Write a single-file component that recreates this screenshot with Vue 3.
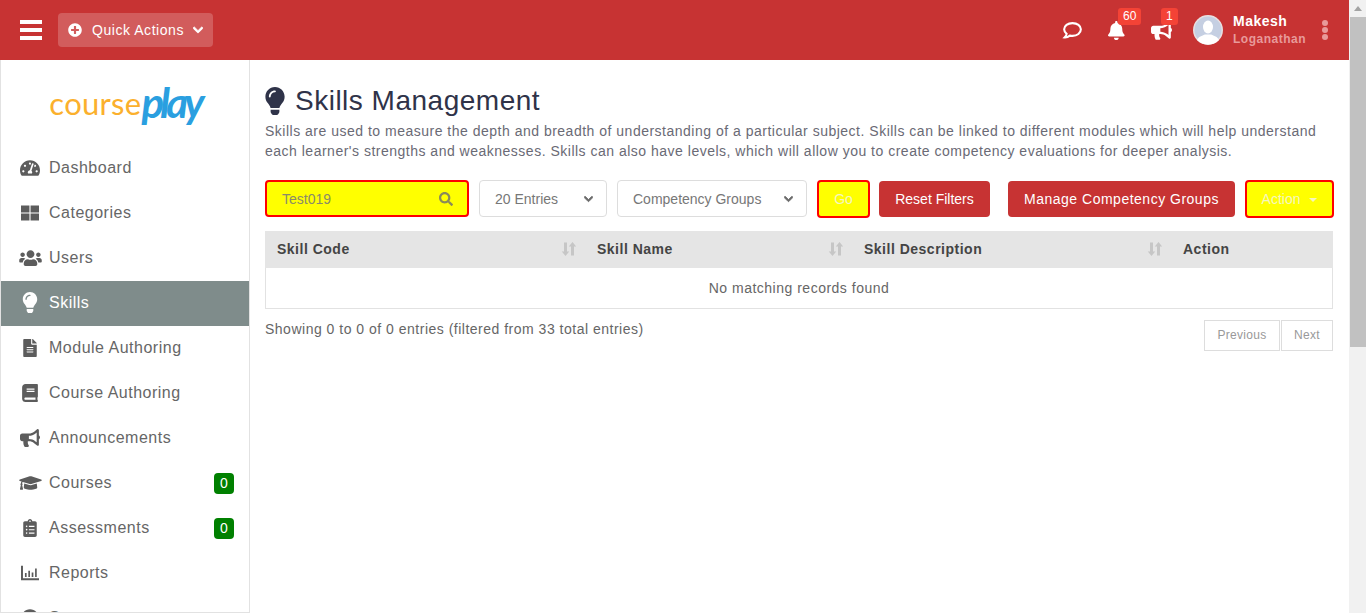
<template>
  <div class="shell">
    <div class="page">
      <header class="topbar">
        <button class="burger"><span></span><span></span><span></span></button>
        <button class="quick">
          <svg class="quick-plus" viewBox="0 0 512 512"><path :d="icons.plus" /></svg>
          <span>Quick Actions</span>
          <svg class="quick-chev" viewBox="0 0 448 512"><path :d="icons.chevron" /></svg>
        </button>
        <div class="top-right">
          <svg class="chat" viewBox="0 0 22 20"><path d="M11 2.200c-5 0-8.800 2.900-8.800 6.600 0 1.900 1 3.500 2.600 4.700-.2 1.300-1 2.600-2.100 3.800 2.100.1 4-.6 5.500-1.900.9.200 1.800.300 2.800.300 5 0 8.800-3 8.800-6.900S16 2.200 11 2.200z" /></svg>
          <div class="top-icon bell">
            <svg viewBox="0 0 448 512"><path :d="icons.bell" /></svg>
            <span class="count">60</span>
          </div>
          <div class="top-icon horn">
            <svg viewBox="0 0 576 512"><path :d="icons.bullhorn" /></svg>
            <span class="count">1</span>
          </div>
          <div class="avatar">
            <svg viewBox="0 0 30 30">
              <circle cx="15" cy="15" r="15" fill="#e8dfe0" />
              <circle cx="15" cy="15" r="13.500" fill="#c5cfe2" />
              <ellipse cx="15" cy="12" rx="5" ry="6.500" fill="#fff" />
              <path d="M4 25c2-4 6-4.500 8-5.500h6c2 1 6 1.500 8 5.500-3 3-7 4.500-11 4.500S7 28 4 25z" fill="#fff" />
            </svg>
          </div>
          <div class="who">
            <strong>Makesh</strong>
            <span>Loganathan</span>
          </div>
          <div class="dots"><i></i><i></i><i></i></div>
        </div>
      </header>

      <div class="body">
        <aside class="sidebar">
          <div class="logo"><span class="logo-a">course</span><span class="logo-b">play</span></div>
          <nav>
            <a v-for="item in menu" :key="item.label" class="nav-item" :class="{ active: item.active }">
              <span class="nav-icon">
                <svg :viewBox="item.box" :style="{ width: item.w + 'px' }"><path :d="item.d" /></svg>
              </span>
              <span class="nav-label">{{ item.label }}</span>
              <span v-if="item.badge" class="nav-badge">{{ item.badge }}</span>
            </a>
          </nav>
        </aside>

        <main class="content">
          <h1 class="title">
            <svg viewBox="0 0 352 512"><path :d="icons.bulb" /></svg>
            Skills Management
          </h1>
          <p class="desc">Skills are used to measure the depth and breadth of understanding of a particular subject. Skills can be linked to different modules which will help understand each learner's strengths and weaknesses. Skills can also have levels, which will allow you to create competency evaluations for deeper analysis.</p>

          <div class="filters">
            <div class="search">
              <span>Test019</span>
              <svg viewBox="0 0 512 512"><path :d="icons.search" /></svg>
            </div>
            <div class="select entries">
              <span>20 Entries</span>
              <svg viewBox="0 0 448 512"><path :d="icons.chevron" /></svg>
            </div>
            <div class="select groups">
              <span>Competency Groups</span>
              <svg viewBox="0 0 448 512"><path :d="icons.chevron" /></svg>
            </div>
            <button class="btn hot go">Go</button>
            <button class="btn reset">Reset Filters</button>
            <button class="btn manage">Manage Competency Groups</button>
            <button class="btn hot action">Action <i class="caret"></i></button>
          </div>

          <div class="table">
            <div class="thead">
              <div v-for="col in columns" :key="col.name" class="th">
                <span>{{ col.name }}</span>
                <svg v-if="col.sort" viewBox="0 0 16 16">
                  <path d="M3 1.500h3v9h2.200L4.500 15 .8 10.500H3zM10 5.500H7.800L11.500 1l3.700 4.500H13V14.500h-3z" />
                </svg>
              </div>
            </div>
            <div class="empty">No matching records found</div>
          </div>

          <div class="foot">
            <span class="info">Showing 0 to 0 of 0 entries (filtered from 33 total entries)</span>
            <div class="pager">
              <button class="prev">Previous</button>
              <button class="next">Next</button>
            </div>
          </div>
        </main>
      </div>
    </div>

    <div class="scrollbar">
      <div class="arrow"></div>
      <div class="thumb"></div>
    </div>
  </div>
</template>

<script setup>
const icons = {
  plus: 'M256 8C119 8 8 119 8 256s111 248 248 248 248-111 248-248S393 8 256 8zm144 276c0 6.600-5.400 12-12 12h-92v92c0 6.600-5.400 12-12 12h-56c-6.600 0-12-5.400-12-12v-92h-92c-6.600 0-12-5.400-12-12v-56c0-6.600 5.400-12 12-12h92v-92c0-6.600 5.400-12 12-12h56c6.600 0 12 5.400 12 12v92h92c6.600 0 12 5.400 12 12v56z',
  chevron: 'M207.029 381.476L12.686 187.132c-9.373-9.373-9.373-24.569 0-33.941l22.667-22.667c9.357-9.357 24.522-9.375 33.901-.04L224 284.505l154.745-154.021c9.379-9.335 24.544-9.317 33.901.04l22.667 22.667c9.373 9.373 9.373 24.569 0 33.941L240.971 381.476c-9.373 9.372-24.569 9.372-33.942 0z',
  bell: 'M224 512c35.320 0 63.970-28.650 63.970-64H160.030c0 35.350 28.650 64 63.970 64zm215.390-149.710c-19.320-20.760-55.470-51.990-55.470-154.290 0-77.700-54.480-139.900-127.940-155.160V32c0-17.670-14.320-32-31.980-32s-31.980 14.330-31.980 32v20.840C118.560 68.100 64.080 130.300 64.080 208c0 102.300-36.150 133.530-55.470 154.290-6 6.450-8.660 14.160-8.610 21.710.11 16.400 12.980 32 32.100 32h383.800c19.120 0 32-15.600 32.100-32 .05-7.550-2.610-15.270-8.610-21.710z',
  bullhorn: 'M576 240c0-23.630-12.950-44.040-32-55.120V32.010C544 23.260 537.020 0 512 0c-7.120 0-14.190 2.380-19.980 7.020l-85.030 68.030C364.280 109.190 310.660 128 256 128H64c-35.350 0-64 28.650-64 64v96c0 35.350 28.650 64 64 64h33.700c-1.390 10.480-2.180 21.140-2.180 32 0 39.770 9.260 77.350 25.560 110.940 5.190 10.690 16.520 17.060 28.400 17.060h74.280c26.050 0 41.690-29.840 25.900-50.560-16.400-21.520-26.150-48.360-26.150-77.440 0-11.110 1.620-21.790 4.410-32H256c54.660 0 108.280 18.810 150.980 52.950l85.030 68.030a32.023 32.023 0 0 0 19.980 7.020c24.920 0 32-22.780 32-32V295.130C563.050 284.040 576 263.630 576 240zm-96 141.420l-33.050-26.440C392.950 311.780 325.120 288 256 288v-96c69.120 0 136.950-23.780 190.950-66.980L480 98.580v282.840z',
  bulb: 'M96.060 454.350c.01 6.290 1.870 12.450 5.360 17.690l17.090 25.690a31.990 31.990 0 0 0 26.640 14.280h61.710a31.990 31.990 0 0 0 26.640-14.280l17.090-25.690a31.989 31.989 0 0 0 5.360-17.690l.04-38.350H96.010l.05 38.350zM0 176c0 44.370 16.450 84.850 43.560 115.780 16.520 18.850 42.360 58.230 52.210 91.450.04.26.07.52.11.78h160.240c.04-.26.07-.51.11-.78 9.850-33.220 35.690-72.600 52.210-91.450C335.550 260.850 352 220.370 352 176 352 78.610 272.910-.3 175.450 0 73.440.31 0 82.970 0 176zm176-80c-44.110 0-80 35.890-80 80 0 8.840-7.160 16-16 16s-16-7.160-16-16c0-61.760 50.240-112 112-112 8.840 0 16 7.160 16 16s-7.160 16-16 16z',
  search: 'M505 442.700L405.300 343c-4.500-4.500-10.600-7-17-7H372c27.600-35.300 44-79.700 44-128C416 93.100 322.900 0 208 0S0 93.100 0 208s93.100 208 208 208c48.300 0 92.700-16.400 128-44v16.300c0 6.400 2.500 12.500 7 17l99.700 99.700c9.400 9.400 24.600 9.400 33.900 0l28.300-28.300c9.400-9.400 9.400-24.600.1-34zM208 336c-70.700 0-128-57.200-128-128 0-70.700 57.200-128 128-128 70.700 0 128 57.200 128 128 0 70.700-57.200 128-128 128z'
}

const menu = [
  { label: 'Dashboard', box: '0 0 576 512', w: 20, d: 'M288 32C128.940 32 0 160.940 0 320c0 52.800 14.250 102.260 39.060 144.800 5.610 9.620 16.300 15.200 27.440 15.200h443c11.140 0 21.830-5.580 27.440-15.200C561.750 422.260 576 372.800 576 320c0-159.060-128.940-288-288-288zm0 64c14.710 0 26.580 10.130 30.320 23.650-1.110 2.260-2.640 4.230-3.450 6.670l-9.220 27.670c-5.130 3.490-10.970 6.010-17.640 6.010-17.670 0-32-14.330-32-32S270.330 96 288 96zM96 384c-17.670 0-32-14.330-32-32s14.330-32 32-32 32 14.330 32 32-14.330 32-32 32zm48-160c-17.670 0-32-14.330-32-32s14.330-32 32-32 32 14.330 32 32-14.330 32-32 32zm246.770-72.410l-61.330 184C343.130 347.330 352 364.540 352 384c0 11.720-3.380 22.550-8.880 32H232.880c-5.500-9.450-8.880-20.280-8.880-32 0-33.940 26.500-61.430 59.900-63.590l61.340-184.010c4.170-12.560 17.730-19.450 30.360-15.170 12.570 4.190 19.350 17.790 15.170 30.360zm14.660 57.200l15.520-46.550c3.470-1.290 7.130-2.230 11.050-2.230 17.670 0 32 14.330 32 32s-14.330 32-32 32c-11.380-.01-20.890-6.280-26.570-15.220zM480 384c-17.670 0-32-14.330-32-32s14.330-32 32-32 32 14.330 32 32-14.330 32-32 32z' },
  { label: 'Categories', box: '0 0 512 512', w: 18, d: 'M0 40h240v200H0zM272 40h240v200H272zM0 272h240v200H0zM272 272h240v200H272z' },
  { label: 'Users', box: '0 0 640 512', w: 23, d: 'M96 224c35.300 0 64-28.700 64-64s-28.700-64-64-64-64 28.700-64 64 28.700 64 64 64zm448 0c35.300 0 64-28.700 64-64s-28.700-64-64-64-64 28.700-64 64 28.700 64 64 64zm32 32h-64c-17.600 0-33.500 7.100-45.100 18.600 40.300 22.100 68.900 62 75.100 109.400h66c17.700 0 32-14.300 32-32v-32c0-35.300-28.700-64-64-64zm-256 0c61.900 0 112-50.100 112-112S381.900 32 320 32 208 82.100 208 144s50.100 112 112 112zm76.800 32h-8.300c-20.800 10-43.900 16-68.500 16s-47.600-6-68.500-16h-8.300C179.600 288 128 339.600 128 403.200V432c0 26.500 21.500 48 48 48h288c26.500 0 48-21.500 48-48v-28.800c0-63.600-51.600-115.200-115.200-115.200zm-223.700-13.400C161.500 263.100 145.600 256 128 256H64c-35.300 0-64 28.700-64 64v32c0 17.700 14.300 32 32 32h65.900c6.300-47.400 34.900-87.300 75.200-109.400z' },
  { label: 'Skills', box: '0 0 352 512', w: 16, active: true, d: icons.bulb },
  { label: 'Module Authoring', box: '0 0 384 512', w: 14, d: 'M224 136V0H24C10.700 0 0 10.700 0 24v464c0 13.300 10.700 24 24 24h336c13.300 0 24-10.700 24-24V160H248c-13.200 0-24-10.800-24-24zm64 236c0 6.600-5.400 12-12 12H108c-6.600 0-12-5.400-12-12v-8c0-6.600 5.400-12 12-12h168c6.600 0 12 5.400 12 12v8zm0-64c0 6.600-5.400 12-12 12H108c-6.600 0-12-5.400-12-12v-8c0-6.600 5.400-12 12-12h168c6.600 0 12 5.400 12 12v8zm0-72v8c0 6.600-5.400 12-12 12H108c-6.600 0-12-5.400-12-12v-8c0-6.600 5.400-12 12-12h168c6.600 0 12 5.400 12 12zm96-114.100v6.100H256V0h6.100c6.400 0 12.500 2.500 17 7l97.900 98c4.500 4.500 7 10.600 7 16.900z' },
  { label: 'Course Authoring', box: '0 0 448 512', w: 16, d: 'M448 360V24c0-13.300-10.700-24-24-24H96C43 0 0 43 0 96v320c0 53 43 96 96 96h328c13.300 0 24-10.700 24-24v-16c0-7.500-3.500-14.300-8.900-18.700-4.200-15.400-4.200-59.300 0-74.700 5.400-4.300 8.900-11.100 8.900-18.600zM128 134c0-3.300 2.700-6 6-6h212c3.300 0 6 2.700 6 6v20c0 3.300-2.700 6-6 6H134c-3.300 0-6-2.700-6-6v-20zm0 64c0-3.300 2.700-6 6-6h212c3.300 0 6 2.700 6 6v20c0 3.300-2.700 6-6 6H134c-3.300 0-6-2.700-6-6v-20zm253.400 250H96c-17.700 0-32-14.300-32-32 0-17.600 14.400-32 32-32h285.400c-1.900 17.100-1.900 46.900 0 64z' },
  { label: 'Announcements', box: '0 0 576 512', w: 20, d: icons.bullhorn },
  { label: 'Courses', box: '0 0 640 512', w: 23, badge: '0', d: 'M622.340 153.200L343.400 67.500c-15.200-4.670-31.600-4.670-46.790 0L17.660 153.200c-23.540 7.230-23.540 38.360 0 45.590l48.630 14.940c-10.670 13.190-17.230 29.280-17.880 46.900C38.780 266.150 32 276.110 32 288c0 10.780 5.680 19.850 13.860 25.650L20.330 428.530C18.110 438.520 25.710 448 35.940 448h56.110c10.240 0 17.840-9.480 15.620-19.470L82.140 313.650C90.320 307.850 96 298.780 96 288c0-11.570-6.470-21.250-15.660-26.870.76-15.020 8.440-28.300 20.690-36.720L296.600 284.500c9.060 2.780 26.440 6.250 46.790 0l278.950-85.700c23.550-7.240 23.550-38.360 0-45.600zM352.790 315.090c-28.530 8.760-52.840 3.920-65.590 0l-145.020-44.550L128 384c0 35.350 85.960 64 192 64s192-28.650 192-64l-14.180-113.470-145.030 44.560z' },
  { label: 'Assessments', box: '0 0 384 512', w: 14, badge: '0', d: 'M336 64h-80c0-35.300-28.700-64-64-64s-64 28.700-64 64H48C21.500 64 0 85.500 0 112v352c0 26.500 21.500 48 48 48h288c26.500 0 48-21.500 48-48V112c0-26.500-21.500-48-48-48zM96 424c-13.300 0-24-10.700-24-24s10.700-24 24-24 24 10.700 24 24-10.700 24-24 24zm0-96c-13.300 0-24-10.700-24-24s10.700-24 24-24 24 10.700 24 24-10.700 24-24 24zm0-96c-13.300 0-24-10.700-24-24s10.700-24 24-24 24 10.700 24 24-10.700 24-24 24zm96-192c13.300 0 24 10.700 24 24s-10.700 24-24 24-24-10.700-24-24 10.700-24 24-24zm128 368c0 4.400-3.600 8-8 8H168c-4.400 0-8-3.600-8-8v-16c0-4.400 3.600-8 8-8h144c4.400 0 8 3.600 8 8v16zm0-96c0 4.400-3.600 8-8 8H168c-4.400 0-8-3.600-8-8v-16c0-4.400 3.600-8 8-8h144c4.400 0 8 3.600 8 8v16zm0-96c0 4.400-3.600 8-8 8H168c-4.400 0-8-3.600-8-8v-16c0-4.400 3.600-8 8-8h144c4.400 0 8 3.600 8 8v16z' },
  { label: 'Reports', box: '0 0 512 512', w: 18, d: 'M0 48h56v360h456v56H0zM112 256h48v112h-48zM208 192h48v176h-48zM304 240h48v128h-48zM400 128h48v240h-48z' },
  { label: 'Support', box: '0 0 512 512', w: 18, d: 'M256 8C119 8 8 119 8 256s111 248 248 248 248-111 248-248S393 8 256 8z' }
]

const columns = [
  { name: 'Skill Code', sort: true },
  { name: 'Skill Name', sort: true },
  { name: 'Skill Description', sort: true },
  { name: 'Action', sort: false }
]
</script>

<style>
html, body {
  margin: 0;
  overflow: hidden;
}
</style>

<style scoped>
* {
  box-sizing: border-box;
}

.shell {
  display: flex;
  width: 1366px;
  height: 613px;
  overflow: hidden;
  font-family: "Liberation Sans", Arial, sans-serif;
  background: #fff;
}

.page {
  flex: 1;
  min-width: 0;
  display: flex;
  flex-direction: column;
}

button {
  font-family: inherit;
  cursor: pointer;
}

/* top bar */
.topbar {
  height: 60px;
  flex: none;
  background: #c73333;
  display: flex;
  align-items: center;
  padding-left: 20px;
}

.burger {
  width: 22px;
  height: 20px;
  padding: 0;
  border: 0;
  background: none;
  display: flex;
  flex-direction: column;
  justify-content: space-between;
}

.burger span {
  display: block;
  height: 4px;
  background: #fff;
}

.quick {
  margin-left: 16px;
  width: 155px;
  height: 34px;
  border: 0;
  border-radius: 4px;
  background: #d25c5c;
  color: #fff;
  display: flex;
  align-items: center;
  padding: 0 0 0 10px;
  font-size: 14px;
  letter-spacing: 0.55px;
}

.quick-plus {
  width: 14px;
  height: 14px;
  fill: #fff;
  margin-right: 10px;
}

.quick-chev {
  width: 10px;
  height: 12px;
  fill: #fff;
  stroke: #fff;
  stroke-width: 40;
  margin-left: 9px;
}

.top-right {
  margin-left: auto;
  display: flex;
  align-items: center;
  height: 100%;
}

.chat {
  width: 21px;
  height: 19px;
  fill: none;
  stroke: #fff;
  stroke-width: 2.2;
  margin-right: 25px;
}

.top-icon {
  position: relative;
  display: flex;
}

.top-icon svg {
  fill: #fff;
  height: 19px;
}

.bell {
  width: 18px;
  margin-right: 25px;
}

.horn {
  width: 21px;
  margin-right: 21px;
}

.count {
  position: absolute;
  top: -13px;
  left: 10px;
  height: 17px;
  padding: 0 5px;
  border-radius: 3px;
  background: #f44336;
  color: #fff;
  font-size: 12px;
  line-height: 16px;
}

.avatar {
  width: 30px;
  height: 30px;
}

.avatar svg {
  display: block;
  width: 30px;
  height: 30px;
}

.who {
  margin-left: 10px;
  display: flex;
  flex-direction: column;
  width: 87px;
  letter-spacing: 0.5px;
}

.who strong {
  color: #fff;
  font-size: 14px;
  line-height: 18px;
}

.who span {
  color: #e89a9a;
  font-size: 12px;
  font-weight: 700;
  line-height: 18px;
}

.dots {
  display: flex;
  flex-direction: column;
  gap: 1px;
  margin-left: 2px;
  margin-right: 21px;
}

.dots i {
  width: 6px;
  height: 6px;
  border-radius: 50%;
  background: #e89a9a;
}

/* sidebar */
.body {
  flex: 1;
  min-height: 0;
  display: flex;
}

.sidebar {
  width: 250px;
  flex: none;
  overflow: hidden;
  border-left: 1px solid #e2e2e2;
  border-right: 1px solid #e2e2e2;
  border-bottom: 1px solid #e2e2e2;
}

.logo {
  height: 86px;
  display: flex;
  justify-content: center;
  align-items: center;
  font-family: Lato, sans-serif;
}

.logo-a {
  color: #fbb02d;
  font-size: 31px;
  font-weight: 400;
  letter-spacing: 0.3px;
}

.logo-b {
  color: #2a9fe0;
  font-size: 42px;
  font-style: italic;
  font-weight: 700;
  letter-spacing: -4px;
  line-height: 46px;
  margin-top: -3px;
}

.nav-item {
  height: 45px;
  display: flex;
  align-items: center;
  padding-bottom: 2px;
  color: #666;
  font-size: 16px;
  letter-spacing: 0.5px;
}

.nav-item.active {
  background: #7f8c8b;
  color: #fff;
}

.nav-icon {
  width: 48px;
  padding-left: 12px;
  padding-right: 2px;
  display: flex;
  justify-content: center;
  flex: none;
}

.nav-icon svg {
  display: block;
  height: 18px;
  fill: #5c5c5c;
}

.active .nav-icon svg {
  fill: #fff;
  height: 21px;
}

.nav-badge {
  margin-left: auto;
  margin-right: 15px;
  margin-top: 2px;
  width: 20px;
  height: 21px;
  border-radius: 4px;
  background: #008000;
  color: #fff;
  font-size: 14px;
  letter-spacing: 0;
  line-height: 21px;
  text-align: center;
}

/* content */
.content {
  flex: 1;
  min-width: 0;
  padding: 0 16px 0 15px;
}

.title {
  margin: 26px 0 0;
  height: 29px;
  display: flex;
  align-items: center;
  gap: 10px;
  color: #2f3349;
  font-size: 28px;
  font-weight: 400;
  letter-spacing: 0.5px;
}

.title svg {
  width: 20px;
  height: 28px;
  fill: #2f3349;
}

.desc {
  margin: 6px 0 0;
  color: #6a6a75;
  font-size: 14px;
  line-height: 20px;
  letter-spacing: 0.5px;
}

.filters {
  display: flex;
  align-items: flex-start;
  margin-top: 19px;
  height: 38px;
}

.search {
  flex: none;
  width: 204px;
  height: 37px;
  border: 2px solid #f00;
  border-radius: 4px;
  background: #ff0;
  color: #8a8a6a;
  display: flex;
  align-items: center;
  justify-content: space-between;
  padding: 0 14px 0 15px;
  font-size: 14px;
}

.search svg {
  width: 14px;
  height: 14px;
  fill: #8a8a5a;
}

.select {
  flex: none;
  height: 37px;
  margin-left: 10px;
  border: 1px solid #ddd;
  border-radius: 4px;
  color: #777;
  display: flex;
  align-items: center;
  justify-content: space-between;
  padding: 0 13px 0 15px;
  font-size: 14px;
}

.select svg {
  width: 9px;
  height: 12px;
  fill: #6a6a6a;
  stroke: #6a6a6a;
  stroke-width: 40;
}

.entries {
  width: 128px;
}

.groups {
  width: 190px;
}

.btn {
  flex: none;
  height: 36px;
  margin-top: 1px;
  border: 0;
  border-radius: 4px;
  background: #c73333;
  color: #fff;
  font-size: 14px;
  padding: 0;
}

.btn.hot {
  height: 38px;
  margin-top: 0;
  background: #ff0;
  border: 2px solid #f00;
  color: #f6f6c0;
}

.go {
  width: 53px;
  margin-left: 10px;
}

.reset {
  width: 111px;
  margin-left: 9px;
}

.manage {
  width: 227px;
  margin-left: 18px;
  letter-spacing: 0.5px;
}

.action {
  width: 89px;
  margin-left: 10px;
}

.caret {
  display: inline-block;
  margin-left: 5px;
  vertical-align: 2px;
  border-top: 4px solid #f6f6c0;
  border-left: 4px solid transparent;
  border-right: 4px solid transparent;
}

.table {
  margin-top: 13px;
}

.thead {
  display: grid;
  grid-template-columns: 320px 267px 319px 1fr;
  height: 37px;
  background: #e5e5e5;
}

.th {
  display: flex;
  align-items: center;
  justify-content: space-between;
  padding: 0 8px 2px 12px;
  color: #444;
  font-size: 14px;
  font-weight: 700;
  letter-spacing: 0.5px;
}

.th svg {
  width: 16px;
  height: 16px;
  fill: #c6c6c6;
}

.empty {
  height: 41px;
  border: 1px solid #e2e2e2;
  border-top: 0;
  color: #666;
  font-size: 14px;
  line-height: 40px;
  text-align: center;
  letter-spacing: 0.5px;
}

.foot {
  display: flex;
  justify-content: space-between;
  align-items: flex-start;
  margin-top: 11px;
}

.info {
  margin-top: -1px;
  color: #666;
  font-size: 14px;
  line-height: 20px;
  letter-spacing: 0.5px;
}

.pager {
  display: flex;
  gap: 1px;
}

.pager button {
  height: 31px;
  border: 1px solid #ddd;
  background: #fff;
  color: #999;
  font-size: 12px;
  letter-spacing: 0.3px;
  padding: 0 0 2px;
}

.prev {
  width: 76px;
}

.next {
  width: 52px;
}

/* page scrollbar */
.scrollbar {
  width: 17px;
  flex: none;
  background: #f1f1f1;
}

.arrow {
  height: 17px;
  display: flex;
  justify-content: center;
  align-items: center;
}

.arrow::before {
  content: "";
  border-bottom: 5px solid #a3a3a3;
  border-left: 4px solid transparent;
  border-right: 4px solid transparent;
}

.thumb {
  height: 330px;
  margin-left: 1px;
  background: #c1c1c1;
}
</style>
